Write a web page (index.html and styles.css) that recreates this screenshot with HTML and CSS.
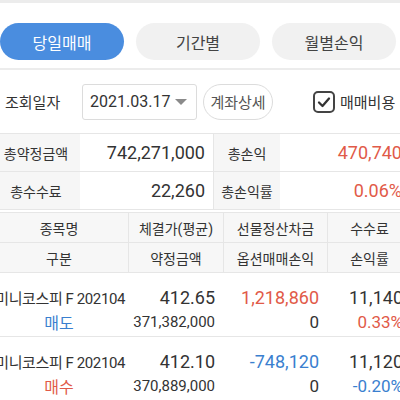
FILE: index.html
```html
<!DOCTYPE html>
<html lang="ko">
<head>
<meta charset="utf-8">
<link rel="stylesheet" href="styles.css">
</head>
<body>
<div class="page">
  <div class="topbar"></div>
  <div class="tabs">
    <div class="tab active">당일매매</div>
    <div class="tab">기간별</div>
    <div class="tab">월별손익</div>
  </div>
  <div class="sep"></div>
  <div class="filter">
    <span class="flabel">조회일자</span>
    <div class="datebox"><span>2021.03.17</span><span class="caret"></span></div>
    <div class="pill">계좌상세</div>
    <div class="check">
      <svg width="22" height="22" viewBox="0 0 22 22"><rect x="1" y="1" width="20" height="20" rx="4" fill="none" stroke="#444" stroke-width="2"/><path d="M6 11.5 L9.5 15 L16 7.5" fill="none" stroke="#333" stroke-width="2.3" stroke-linecap="round" stroke-linejoin="round"/></svg>
      <span>매매비용</span>
    </div>
  </div>
  <div class="summary">
    <div class="slabel first">총약정금액</div>
    <div class="sval">742,271,000</div>
    <div class="slabel">총손익</div>
    <div class="sval red">470,740</div>
    <div class="slabel first">총수수료</div>
    <div class="sval">22,260</div>
    <div class="slabel">총손익률</div>
    <div class="sval red">0.06%</div>
  </div>
  <div class="thead">
    <div class="th c1">종목명</div>
    <div class="th">체결가(평균)</div>
    <div class="th">선물정산차금</div>
    <div class="th">수수료</div>
    <div class="th c1">구분</div>
    <div class="th">약정금액</div>
    <div class="th">옵션매매손익</div>
    <div class="th">손익률</div>
  </div>
  <div class="drow">
    <div class="name">미니코스피 F 202104</div>
    <div class="big">412.65</div>
    <div class="big red">1,218,860</div>
    <div class="big">11,140</div>
    <div class="kind blue">매도</div>
    <div class="small">371,382,000</div>
    <div class="mid">0</div>
    <div class="mid red">0.33%</div>
  </div>
  <div class="drow">
    <div class="name">미니코스피 F 202104</div>
    <div class="big">412.10</div>
    <div class="big blue">-748,120</div>
    <div class="big">11,120</div>
    <div class="kind red">매수</div>
    <div class="small">370,889,000</div>
    <div class="mid">0</div>
    <div class="mid blue">-0.20%</div>
  </div>
</div>
</body>
</html>
```
FILE: styles.css
```css
html, body {
  margin: 0;
  padding: 0;
  width: 400px;
  height: 400px;
  overflow: hidden;
  background: #fff;
}
.page {
  width: 420px;
  font-family: Roboto, "Noto Sans CJK KR", sans-serif;
  color: #333;
}
.topbar {
  height: 3px;
  background: #ececec;
}
.tabs {
  display: flex;
  gap: 12px;
  padding: 20px 0 8px 0;
}
.tab {
  width: 124px;
  height: 37px;
  border-radius: 19px;
  background: #f1f1f1;
  color: #444;
  font-size: 16px;
  display: flex;
  align-items: center;
  justify-content: center;
}
.tab.active {
  background: #4a8ddf;
  color: #fff;
}
.sep {
  height: 2px;
  background: #ececec;
}
.filter {
  display: flex;
  align-items: center;
  height: 63px;
  padding-left: 5px;
}
.flabel {
  font-size: 15px;
  color: #333;
  width: 77px;
}
.datebox {
  width: 115px;
  height: 36px;
  border: 1px solid #dcdcdc;
  border-radius: 3px;
  display: flex;
  align-items: center;
  justify-content: space-between;
  padding: 0 9px 0 7px;
  box-sizing: border-box;
  font-size: 16px;
}
.caret {
  width: 0;
  height: 0;
  border-left: 6px solid transparent;
  border-right: 6px solid transparent;
  border-top: 6px solid #8a8a8a;
}
.pill {
  margin-left: 6px;
  width: 70px;
  height: 36px;
  box-sizing: border-box;
  border: 1px solid #dcdcdc;
  border-radius: 18px;
  display: flex;
  align-items: center;
  justify-content: center;
  font-size: 15px;
  color: #555;
}
.check {
  margin-left: 40px;
  display: flex;
  align-items: center;
  gap: 5px;
  font-size: 15px;
  color: #333;
}
.check svg {
  display: block;
}
.summary {
  display: grid;
  grid-template-columns: 80px 133px 67px 130px;
  grid-auto-rows: 38px;
  border-top: 1px solid #e6e6e6;
}
.summary > div {
  border-bottom: 1px solid #e6e6e6;
  display: flex;
  align-items: center;
}
.slabel {
  background: #f6f6f6;
  justify-content: center;
  font-size: 14px;
  color: #333;
  border-left: 1px solid #e6e6e6;
}
.slabel.first {
  border-left: none;
  padding-right: 8px;
}
.sval {
  justify-content: flex-end;
  padding-right: 8px;
  font-size: 18px;
  color: #333;
}
.red { color: #e15a48 !important; }
.blue { color: #3a7fcf !important; }
.thead {
  margin-top: 2px;
  display: grid;
  grid-template-columns: 128px 95px 104px 84px;
  grid-auto-rows: 30px;
  background: #f7f7f7;
  border-top: 1px solid #e6e6e6;
}
.th {
  display: flex;
  align-items: center;
  justify-content: center;
  font-size: 14px;
  color: #333;
  border-bottom: 1px solid #e6e6e6;
  border-left: 1px solid #e6e6e6;
}
.th.c1 {
  border-left: none;
  padding-right: 10px;
}
.drow {
  display: grid;
  grid-template-columns: 128px 95px 104px 84px;
  grid-template-rows: 25px 24px;
  padding: 12px 0 2px 0;
  border-bottom: 1px solid #e6e6e6;
}
.drow > div {
  display: flex;
  align-items: center;
  justify-content: flex-end;
  padding-right: 8px;
  white-space: nowrap;
}
.drow > .name {
  font-size: 15px;
  letter-spacing: -0.4px;
  padding-right: 3px;
  color: #333;
}
.drow > .kind {
  justify-content: center;
  padding-right: 10px;
  font-size: 16px;
}
.big {
  font-size: 18px;
}
.small {
  font-size: 15px;
}
.mid {
  font-size: 17px;
}
```
